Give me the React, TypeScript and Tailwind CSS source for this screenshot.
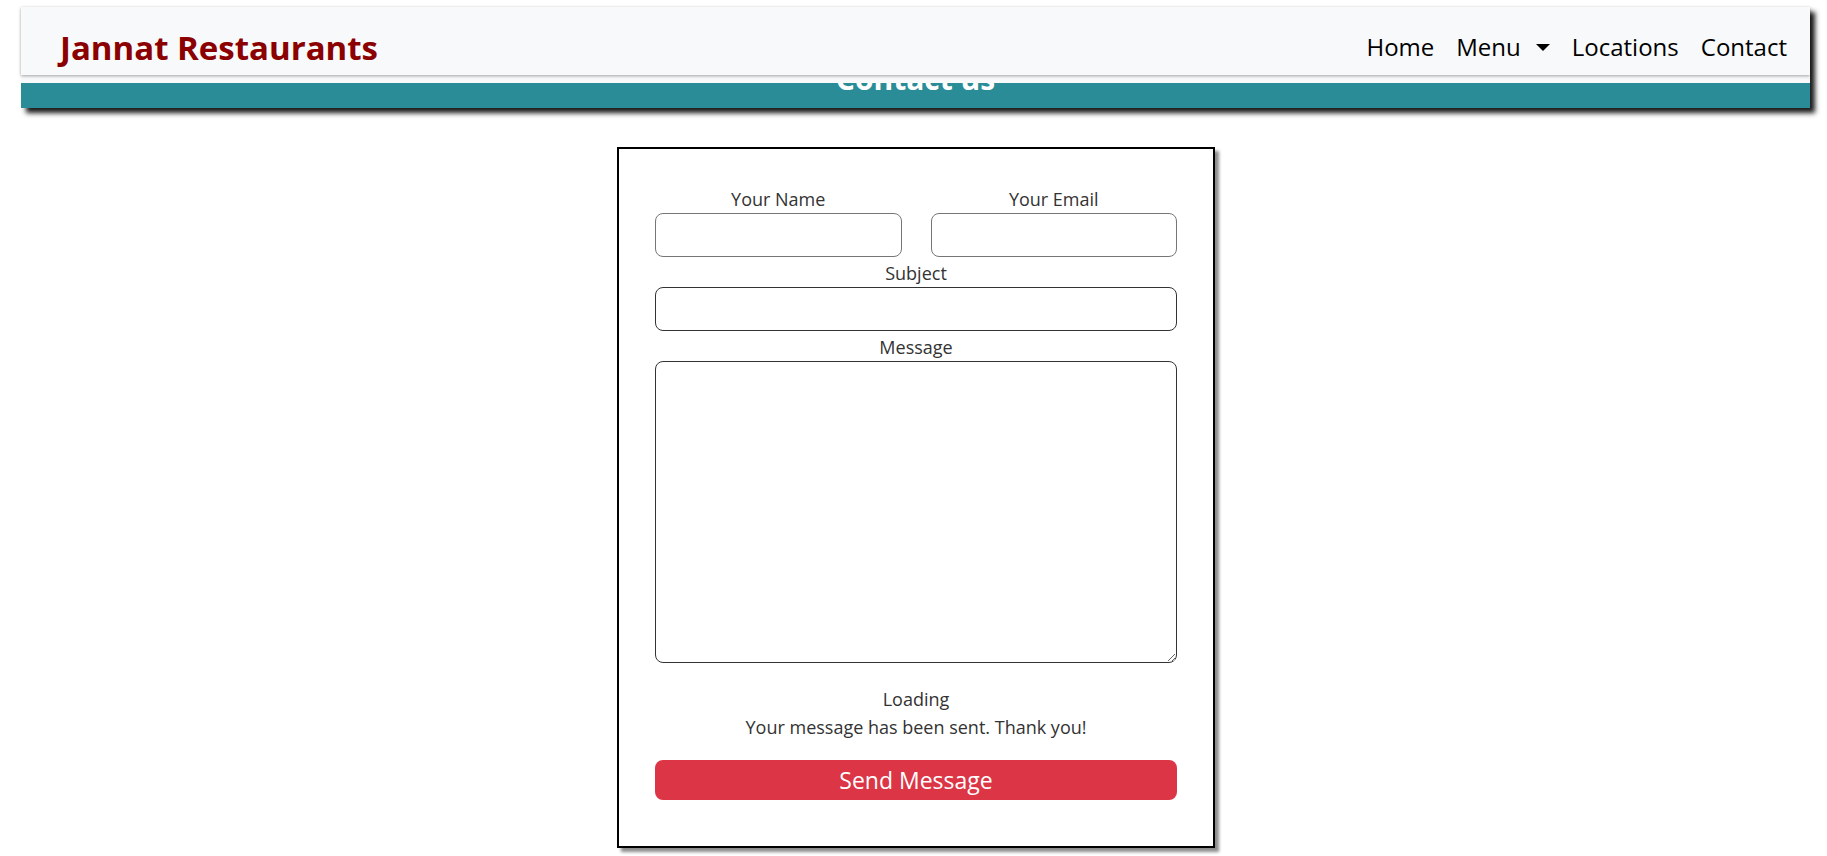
export default function App() {
  return (
    <div className="min-h-screen bg-white font-['Open_Sans',sans-serif] text-[#333]">
      {/* Header block: navbar + teal title bar */}
      <div className="ml-[21px] mr-[17px] pt-[7px]">
        <div className="bg-[#f8f9fa] shadow-[5px_5px_5px_rgba(0,0,0,0.9)]">
          <nav className="relative z-10 flex h-[68px] items-start justify-between bg-[#f8f9fa] pl-[39px] pr-[23px] shadow-[0_1px_3px_rgba(0,0,0,0.35)]">
            <a href="#" className="mt-[16px] text-[33px] font-bold leading-[1.5] text-[#8b0000]">
              Jannat Restaurants
            </a>
            <ul className="mt-[22px] flex items-baseline gap-[22px] text-[24px] leading-[1.5] text-black">
              <li>
                <a href="#">Home</a>
              </li>
              <li className="flex items-baseline">
                <a href="#">Menu</a>
                <span className="ml-[15px] inline-block translate-y-[-5px] border-x-[7px] border-t-[7px] border-x-transparent border-t-black" />
              </li>
              <li>
                <a href="#">Locations</a>
              </li>
              <li>
                <a href="#">Contact</a>
              </li>
            </ul>
          </nav>
          <div className="mt-[8px] h-[25px] overflow-hidden bg-[#298c97]">
            <h1 className="-mt-[19px] text-center text-[30px] font-bold leading-none text-white">
              Contact us
            </h1>
          </div>
        </div>
      </div>

      {/* Contact form card */}
      <div className="flex justify-center pl-[5px] pt-[39px]">
        <form className="w-[598px] border-2 border-black bg-white px-[36px] pb-[46px] pt-[34px] shadow-[4px_4px_3px_rgba(0,0,0,0.45)]">
          <div className="grid grid-cols-2 gap-[29px]">
            <div>
              <label className="block pt-[3px] text-center text-[18px] leading-[27px]">Your Name</label>
              <input
                type="text"
                className="block h-[44px] w-full rounded-[8px] border border-[#767676] bg-white outline-none"
              />
            </div>
            <div>
              <label className="block pt-[3px] text-center text-[18px] leading-[27px]">Your Email</label>
              <input
                type="email"
                className="block h-[44px] w-full rounded-[8px] border border-[#767676] bg-white outline-none"
              />
            </div>
          </div>

          <label className="block pt-[3px] text-center text-[18px] leading-[27px]">Subject</label>
          <input
            type="text"
            className="block h-[44px] w-full rounded-[8px] border border-[#333] bg-white outline-none"
          />

          <label className="block pt-[3px] text-center text-[18px] leading-[27px]">Message</label>
          <textarea className="block h-[302px] w-full rounded-[8px] border border-[#333] bg-white outline-none" />

          <div className="mt-[22px] text-center text-[18px] leading-[28px]">
            <div>Loading</div>
            <div>Your message has been sent. Thank you!</div>
          </div>

          <button
            type="button"
            className="mt-[19px] block h-[40px] w-full rounded-[8px] bg-[#dc3545] text-[23px] leading-[40px] text-white"
          >
            Send Message
          </button>
        </form>
      </div>
    </div>
  )
}
